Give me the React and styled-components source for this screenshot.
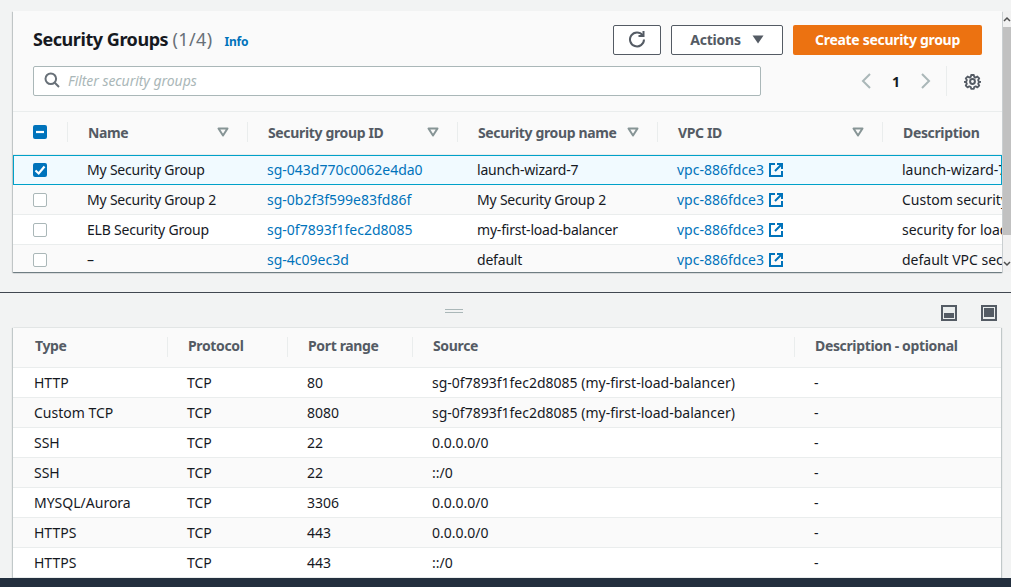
import styled, { createGlobalStyle } from 'styled-components';

const GlobalStyle = createGlobalStyle`
  html, body {
    margin: 0;
    padding: 0;
    height: 587px;
    overflow: hidden;
    background: #f2f3f3;
    font-family: "Noto Sans", "Open Sans", sans-serif;
    font-size: 14px;
    color: #16191f;
  }
`;

const groups = [
  { name: 'My Security Group', id: 'sg-043d770c0062e4da0', group: 'launch-wizard-7', desc: 'launch-wizard-7 created', selected: true },
  { name: 'My Security Group 2', id: 'sg-0b2f3f599e83fd86f', group: 'My Security Group 2', desc: 'Custom security group' },
  { name: 'ELB Security Group', id: 'sg-0f7893f1fec2d8085', group: 'my-first-load-balancer', desc: 'security for load balancer' },
  { name: '–', id: 'sg-4c09ec3d', group: 'default', desc: 'default VPC security group' },
];

const rules = [
  ['HTTP', 'TCP', '80', 'sg-0f7893f1fec2d8085 (my-first-load-balancer)'],
  ['Custom TCP', 'TCP', '8080', 'sg-0f7893f1fec2d8085 (my-first-load-balancer)'],
  ['SSH', 'TCP', '22', '0.0.0.0/0'],
  ['SSH', 'TCP', '22', '::/0'],
  ['MYSQL/Aurora', 'TCP', '3306', '0.0.0.0/0'],
  ['HTTPS', 'TCP', '443', '0.0.0.0/0'],
  ['HTTPS', 'TCP', '443', '::/0'],
];

function SortIcon() {
  return (
    <svg width="12" height="10" viewBox="0 0 12 10">
      <path d="M1.5 1.500h9L6 8.500z" fill="none" stroke="#879596" strokeWidth="2" strokeLinejoin="round" />
    </svg>
  );
}

function ExternalIcon() {
  return (
    <svg width="14" height="14" viewBox="0 0 14 14" fill="none" stroke="#0073bb" strokeWidth="2">
      <path d="M6 1H1v12h12V8" />
      <path d="M8 1h5v5M13 1L6 8" />
    </svg>
  );
}

function Checkbox({ state }) {
  return (
    <Box $state={state}>
      {state === 'checked' && (
        <svg width="14" height="14" viewBox="0 0 14 14" fill="none" stroke="#fff" strokeWidth="2.2">
          <path d="M2.500 7.500L5.700 10.500 11.500 3.500" />
        </svg>
      )}
      {state === 'partial' && (
        <svg width="14" height="14" viewBox="0 0 14 14" fill="none" stroke="#fff" strokeWidth="2.2">
          <path d="M3 7h8" />
        </svg>
      )}
    </Box>
  );
}

export default function App() {
  return (
    <>
      <GlobalStyle />
      <Page>
        <TopArea>
          <Card>
            <Header>
              <TitleRow>
                <Title>Security Groups <Count>(1/4)</Count></Title>
                <Info>Info</Info>
                <Actions>
                  <OutlineButton $width={48}>
                    <svg width="18" height="18" viewBox="0 0 18 18" fill="none" stroke="#545b64" strokeWidth="2">
                      <path d="M14.600 5.200A7 7 0 1 0 16 9.500" />
                      <path d="M15.500 1v5h-5" />
                    </svg>
                  </OutlineButton>
                  <OutlineButton $width={112}>
                    Actions
                    <svg width="12" height="9" viewBox="0 0 12 9"><path d="M0.500 0.500h11L6 8.500z" fill="#545b64" /></svg>
                  </OutlineButton>
                  <PrimaryButton>Create security group</PrimaryButton>
                </Actions>
              </TitleRow>
              <FilterRow>
                <Filter>
                  <svg width="16" height="16" viewBox="0 0 16 16" fill="none" stroke="#687078" strokeWidth="2">
                    <circle cx="6.800" cy="6.800" r="5.300" />
                    <path d="M10.800 10.800L15 15" />
                  </svg>
                  <span>Filter security groups</span>
                </Filter>
                <Pager>
                  <svg width="10" height="16" viewBox="0 0 10 16" fill="none" stroke="#aab7b8" strokeWidth="2"><path d="M9 1L2 8l7 7" /></svg>
                  <PageNumber>1</PageNumber>
                  <svg width="10" height="16" viewBox="0 0 10 16" fill="none" stroke="#aab7b8" strokeWidth="2"><path d="M1 1l7 7-7 7" /></svg>
                </Pager>
                <Settings>
                  <svg width="17" height="17" viewBox="0 0 24 24" fill="none" stroke="#545b64" strokeWidth="2.800" strokeLinejoin="round">
                    <circle cx="12" cy="12" r="3.400" />
                    <path d="M10 2h4l.6 3 2.300 1 2.600-1.600 2.800 2.800-1.600 2.600 1 2.300 3 .6v0l-3 .6-1 2.300 1.600 2.600-2.800 2.800-2.600-1.600-2.300 1-.6 3h-4l-.6-3-2.300-1-2.600 1.600-2.800-2.800 1.600-2.600-1-2.300-3-.6v0l3-.6 1-2.300-1.600-2.600 2.800-2.800 2.600 1.600 2.300-1z" transform="translate(12 12) scale(.92) translate(-12 -12)" />
                  </svg>
                </Settings>
              </FilterRow>
            </Header>
            <Table>
              <colgroup>
                <col style={{ width: 54 }} />
                <col style={{ width: 180 }} />
                <col style={{ width: 210 }} />
                <col style={{ width: 200 }} />
                <col style={{ width: 225 }} />
                <col style={{ width: 120 }} />
              </colgroup>
              <thead>
                <tr>
                  <HeadCell $first><Checkbox state="partial" /></HeadCell>
                  <HeadCell><HeadInner>Name<SortIcon /></HeadInner></HeadCell>
                  <HeadCell><HeadInner>Security group ID<SortIcon /></HeadInner></HeadCell>
                  <HeadCell><HeadInner>Security group name<SortIcon /></HeadInner></HeadCell>
                  <HeadCell><HeadInner>VPC ID<SortIcon /></HeadInner></HeadCell>
                  <HeadCell><HeadInner>Description</HeadInner></HeadCell>
                </tr>
              </thead>
              <tbody>
                {groups.map((g, i) => (
                  <GroupRow key={g.id} $selected={g.selected} $odd={i % 2 === 1}>
                    <Cell><Checkbox state={g.selected ? 'checked' : 'empty'} /></Cell>
                    <NameCell>{g.name}</NameCell>
                    <Cell><Link>{g.id}</Link></Cell>
                    <NameCell>{g.group}</NameCell>
                    <Cell><Link>vpc-886fdce3</Link> <ExternalIcon /></Cell>
                    <Cell>{g.desc}</Cell>
                  </GroupRow>
                ))}
              </tbody>
            </Table>
          </Card>
          <ScrollBar>
            <ScrollArrow>
              <svg width="8" height="6" viewBox="0 0 8 6" fill="none" stroke="#505050" strokeWidth="1.500"><path d="M1 5l3-3 3 3" /></svg>
            </ScrollArrow>
            <ScrollThumb />
            <ScrollArrow $bottom>
              <svg width="8" height="6" viewBox="0 0 8 6" fill="none" stroke="#505050" strokeWidth="1.500"><path d="M1 1l3 3 3-3" /></svg>
            </ScrollArrow>
          </ScrollBar>
        </TopArea>
        <SplitPanel>
          <SplitBar>
            <Handle />
            <PanelIcons>
              <PanelIcon $bottom />
              <PanelIcon />
            </PanelIcons>
          </SplitBar>
          <RuleCard>
            <Table>
              <colgroup>
                <col style={{ width: 154 }} />
                <col style={{ width: 120 }} />
                <col style={{ width: 125 }} />
                <col style={{ width: 382 }} />
                <col style={{ width: 207 }} />
              </colgroup>
              <thead>
                <tr>
                  <RuleHead>Type</RuleHead>
                  <RuleHead $divider>Protocol</RuleHead>
                  <RuleHead $divider>Port range</RuleHead>
                  <RuleHead $divider>Source</RuleHead>
                  <RuleHead $divider>Description - optional</RuleHead>
                </tr>
              </thead>
              <tbody>
                {rules.map((r, i) => (
                  <RuleRow key={i} $odd={i % 2 === 1}>
                    {r.map((v, j) => <RuleCell key={j}>{v}</RuleCell>)}
                    <RuleCell>-</RuleCell>
                  </RuleRow>
                ))}
              </tbody>
            </Table>
          </RuleCard>
        </SplitPanel>
        <Footer />
      </Page>
    </>
  );
}

const Page = styled.div`
  display: flex;
  flex-direction: column;
  height: 587px;
  overflow: hidden;
`;

const TopArea = styled.div`
  display: flex;
  flex: none;
  height: 292px;
  padding: 11px 0 0 13px;
  box-sizing: border-box;
`;

const Card = styled.div`
  width: 989px;
  height: 261px;
  overflow: hidden;
  background: #fff;
  box-shadow: 0 1px 1px 0 rgba(0, 28, 36, 0.4), 1px 1px 1px 0 rgba(0, 28, 36, 0.1), -1px 1px 1px 0 rgba(0, 28, 36, 0.15);
`;

const Header = styled.div`
  height: 101px;
  box-sizing: border-box;
  padding: 14px 20px 0;
  background: #fafafa;
  border-bottom: 1px solid #eaeded;
`;

const TitleRow = styled.div`
  display: flex;
  align-items: center;
  height: 30px;
`;

const Title = styled.h1`
  margin: -2px 0 0;
  font-size: 18px;
  font-weight: 700;
  letter-spacing: -0.45px;
`;

const Count = styled.span`
  font-weight: 400;
  color: #687078;
  letter-spacing: 0.4px;
`;

const Info = styled.a`
  margin-left: 12px;
  margin-top: 2px;
  font-size: 12px;
  font-weight: 700;
  color: #0073bb;
  letter-spacing: -0.2px;
`;

const Actions = styled.div`
  display: flex;
  gap: 10px;
  margin-left: auto;
`;

const OutlineButton = styled.button`
  display: flex;
  align-items: center;
  justify-content: center;
  gap: 11px;
  width: ${(p) => p.$width}px;
  height: 30px;
  padding: 0 0 2px;
  background: #fff;
  border: 1px solid #545b64;
  border-radius: 2px;
  color: #545b64;
  font: 700 14px "Noto Sans", sans-serif;
  letter-spacing: -0.2px;
`;

const PrimaryButton = styled.button`
  width: 189px;
  height: 30px;
  padding: 0 0 2px;
  background: #ec7211;
  border: none;
  border-radius: 2px;
  color: #fff;
  font: 700 14px "Noto Sans", sans-serif;
  letter-spacing: -0.3px;
`;

const FilterRow = styled.div`
  display: flex;
  align-items: center;
  margin-top: 11px;
`;

const Filter = styled.div`
  display: flex;
  align-items: center;
  gap: 8px;
  width: 728px;
  height: 30px;
  box-sizing: border-box;
  padding: 0 0 2px 10px;
  background: #fff;
  border: 1px solid #aab7b8;
  border-radius: 2px;
  color: #aab7b8;
  font-style: italic;
  letter-spacing: -0.05px;
`;

const Pager = styled.div`
  display: flex;
  align-items: center;
  margin-left: 100px;
  gap: 21px;
`;

const PageNumber = styled.span`
  font-weight: 700;
`;

const Settings = styled.div`
  display: flex;
  align-items: center;
  height: 30px;
  margin-left: 15px;
  padding-left: 17px;
  border-left: 1px solid #eaeded;
`;

const Table = styled.table`
  width: 100%;
  table-layout: fixed;
  border-collapse: collapse;
`;

const HeadCell = styled.th`
  height: 40px;
  padding: 0 0 2px ${(p) => (p.$first ? '20px' : '0')};
  background: #fafafa;
  border-bottom: 1px solid #eaeded;
  text-align: left;
  color: #545b64;
  font-size: 14px;
  font-weight: 700;
  letter-spacing: -0.35px;
  white-space: nowrap;
`;

const HeadInner = styled.div`
  display: flex;
  align-items: center;
  justify-content: space-between;
  height: 20px;
  padding: 0 18px 0 20px;
  border-left: 1px solid #eaeded;
`;

const GroupRow = styled.tr`
  height: 30px;
  background: ${(p) => (p.$selected ? '#f1faff' : p.$odd ? '#fafafa' : '#fff')};
  outline: ${(p) => (p.$selected ? '1px solid #00a1c9' : 'none')};
  outline-offset: -1px;
`;

const Cell = styled.td`
  padding: 0 0 0 20px;
  border-bottom: 1px solid #eaeded;
  font-size: 14px;
  white-space: nowrap;
  overflow: hidden;
  svg {
    vertical-align: -2px;
    margin-left: 1px;
  }
`;

const NameCell = styled(Cell)`
  letter-spacing: -0.2px;
`;

const Box = styled.div`
  display: flex;
  align-items: center;
  justify-content: center;
  width: 14px;
  height: 14px;
  border-radius: 2px;
  box-sizing: border-box;
  background: ${(p) => (p.$state === 'empty' ? '#fff' : '#0073bb')};
  border: ${(p) => (p.$state === 'empty' ? '1px solid #aab7b8' : 'none')};
  svg {
    margin: 0;
  }
`;

const Link = styled.a`
  color: #0073bb;
`;

const ScrollBar = styled.div`
  display: flex;
  flex-direction: column;
  width: 8px;
  height: 261px;
  margin-left: 1px;
  background: #f1f1f1;
`;

const ScrollArrow = styled.div`
  display: flex;
  align-items: center;
  justify-content: center;
  height: 16px;
  margin-top: ${(p) => (p.$bottom ? 'auto' : '0')};
`;

const ScrollThumb = styled.div`
  height: 208px;
  background: #c1c1c1;
  flex: none;
`;

const SplitPanel = styled.div`
  flex: none;
  display: flex;
  flex-direction: column;
  border-top: 1px solid #414750;
`;

const SplitBar = styled.div`
  position: relative;
  display: flex;
  justify-content: flex-end;
  height: 35px;
  padding: 12px 14px 0 0;
  box-sizing: border-box;
`;

const Handle = styled.div`
  position: absolute;
  top: 16px;
  left: 445px;
  width: 18px;
  height: 2px;
  border-top: 1px solid #aab7b8;
  border-bottom: 1px solid #aab7b8;
`;

const PanelIcons = styled.div`
  display: flex;
  gap: 24px;
`;

const PanelIcon = styled.div`
  position: relative;
  width: 16px;
  height: 16px;
  box-sizing: border-box;
  border: 2px solid #545b64;
  background: #eaeded;
  &::after {
    content: '';
    position: absolute;
    left: 1px;
    right: 1px;
    background: #545b64;
    top: ${(p) => (p.$bottom ? '6px' : '1px')};
    bottom: ${(p) => (p.$bottom ? '1px' : '2px')};
  }
`;

const RuleCard = styled.div`
  width: 988px;
  margin-left: 13px;
  height: 250px;
  overflow: hidden;
  background: #fff;
  box-shadow: 1px 0 1px 0 rgba(0, 28, 36, 0.2), -1px 0 1px 0 rgba(0, 28, 36, 0.2);
`;

const RuleHead = styled.th`
  height: ${(p) => (p.$divider ? '37px' : '35px')};
  padding: 0 0 ${(p) => (p.$divider ? '2px 0' : '4px 22px')};
  background: #fafafa;
  border-bottom: 1px solid #eaeded;
  text-align: left;
  color: #545b64;
  font-size: 14px;
  font-weight: 700;
  letter-spacing: -0.35px;
  white-space: nowrap;
  ${(p) => p.$divider && `
    &::before {
      content: '';
      display: inline-block;
      width: 1px;
      height: 20px;
      margin-right: 20px;
      background: #eaeded;
      vertical-align: middle;
    }
  `}
`;

const RuleRow = styled.tr`
  height: 30px;
  background: ${(p) => (p.$odd ? '#fafafa' : '#fff')};
`;

const RuleCell = styled.td`
  padding: 0 0 0 20px;
  border-bottom: 1px solid #eaeded;
  font-size: 14px;
  white-space: nowrap;
  &:first-child {
    padding-left: 21px;
  }
`;

const Footer = styled.div`
  flex: none;
  height: 9px;
  background: #232f3e;
`;
